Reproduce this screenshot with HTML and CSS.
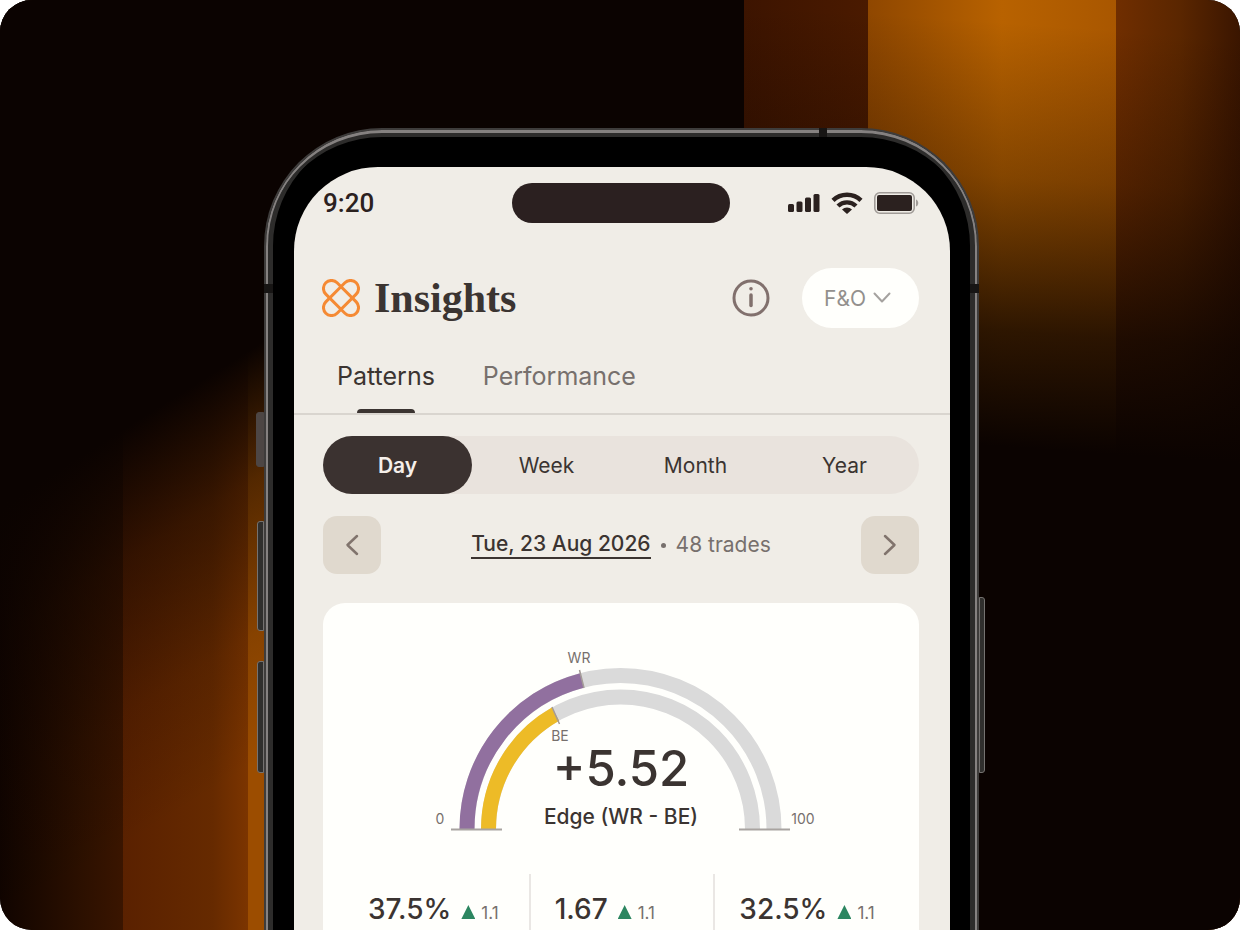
FILE: index.html
```html
<!DOCTYPE html>
<html lang="en">
<head>
    <meta charset="UTF-8">
    <meta name="viewport" content="width=device-width, initial-scale=1.0">
    <title>Insights</title>
    <link rel="stylesheet" href="styles.css">
</head>
<body>
    <div class="stage">
        <div class="glow glow-left"></div>
        <div class="glow glow-right"></div>

        <div class="phone">
            <span class="side-key key-action"></span>
            <span class="side-key key-up"></span>
            <span class="side-key key-down"></span>
            <span class="side-key key-power"></span>
            <span class="antenna antenna-left"></span>
            <span class="antenna antenna-right"></span>
            <span class="antenna antenna-top"></span>

            <main class="screen">
                <div class="status-bar">
                    <span class="time">9:20</span>
                    <span class="island"></span>
                    <div class="status-icons">
                        <svg width="32" height="20" viewBox="0 0 32 20" fill="#2b211f">
                            <rect x="0" y="11" width="6" height="8" rx="1.5"/>
                            <rect x="8.5" y="8.5" width="6" height="10.5" rx="1.5"/>
                            <rect x="17" y="4.500" width="6" height="14.5" rx="1.5"/>
                            <rect x="25.5" y="1" width="6" height="18" rx="1.5"/>
                        </svg>
                        <svg width="32" height="22" viewBox="0 0 32 22" fill="none" stroke="#2b211f" stroke-width="4.4">
                            <path d="M2 8.4a20 20 0 0 1 28 0"/>
                            <path d="M7 14a13 13 0 0 1 18 0"/>
                            <path d="M16 22l-5-4.5a7.300 7.300 0 0 1 10 0z" fill="#2b211f" stroke="none"/>
                        </svg>
                        <svg width="45" height="22" viewBox="0 0 45 22">
                            <rect x="0.8" y="0.8" width="39.4" height="20.4" rx="5" fill="none" stroke="#a09b97" stroke-width="1.6"/>
                            <rect x="3" y="3" width="35" height="16" rx="2" fill="#2b211f"/>
                            <path d="M42 7.5c3 1 3 6 0 7z" fill="#a09b97"/>
                        </svg>
                    </div>
                </div>

                <header class="header">
                    <svg class="logo" width="38" height="38" viewBox="0 0 38 38" fill="none" stroke="#f58a34" stroke-width="3">
                        <rect x="-2.5" y="11" width="43" height="16" rx="8" transform="rotate(45 19 19)"/>
                        <rect x="-2.5" y="11" width="43" height="16" rx="8" transform="rotate(-45 19 19)"/>
                    </svg>
                    <h1 class="title">Insights</h1>
                    <button class="info" aria-label="About insights">
                        <svg width="38" height="38" viewBox="0 0 38 38" fill="none" stroke="#81706d">
                            <circle cx="19" cy="19" r="17" stroke-width="3"/>
                            <path d="M19 16v10.5" stroke-width="3.5" stroke-linecap="round"/>
                            <circle cx="19" cy="9.8" r="1.8" fill="#81706d" stroke="none"/>
                        </svg>
                    </button>
                    <div class="segment">
                        <select aria-label="Market segment">
                            <option>F&amp;O</option>
                        </select>
                        <svg width="18" height="12" viewBox="0 0 18 12" fill="none" stroke="#a5a29f" stroke-width="2" stroke-linecap="round" stroke-linejoin="round">
                            <path d="M1.500 1.500l7.500 8 7.500-8"/>
                        </svg>
                    </div>
                </header>

                <nav class="tabs">
                    <button class="tab active">Patterns</button>
                    <button class="tab">Performance</button>
                </nav>

                <div class="content">
                    <div class="range">
                        <button class="active">Day</button>
                        <button>Week</button>
                        <button>Month</button>
                        <button>Year</button>
                    </div>

                    <div class="date-row">
                        <button class="arrow" aria-label="Previous day">
                            <svg width="14" height="22" viewBox="0 0 14 22"><path d="M12 2L2.500 11l9.500 9"/></svg>
                        </button>
                        <div class="date-info">
                            <button class="date">Tue, 23 Aug 2026</button>
                            <span class="dot"></span>
                            <span class="trades">48 trades</span>
                        </div>
                        <button class="arrow" aria-label="Next day">
                            <svg width="14" height="22" viewBox="0 0 14 22"><path d="M2 2l9.500 9L2 20"/></svg>
                        </button>
                    </div>

                    <section class="card">
                        <div class="gauge">
                            <svg width="400" height="192" viewBox="0 0 400 192" fill="none">
                                <!-- tracks -->
                                <path d="M46 186a153.500 153.500 0 0 1 307 0" stroke="#dadada" stroke-width="15"/>
                                <path d="M67.500 186a132 132 0 0 1 264 0" stroke="#dadada" stroke-width="15"/>
                                <!-- win rate and break even -->
                                <path d="M46 186A153.500 153.500 0 0 1 161 37.400" stroke="#91709f" stroke-width="15"/>
                                <path d="M67.500 186A132 132 0 0 1 134.500 71.100" stroke="#edbb27" stroke-width="15"/>
                                <path d="M158.500 27l4.500 18M131 64l7.500 17" stroke="#a39a97" stroke-width="1.5"/>
                                <path d="M30 186.500h51M318 186.500h51" stroke="#a8a3a0" stroke-width="2"/>
                                <g class="gauge-text">
                                    <text x="158" y="20" text-anchor="middle">WR</text>
                                    <text x="139" y="98" text-anchor="middle">BE</text>
                                    <text x="19" y="181" text-anchor="middle">0</text>
                                    <text x="382" y="181" text-anchor="middle">100</text>
                                </g>
                            </svg>
                            <div class="reading">
                                <strong>+5.52</strong>
                                <span>Edge (WR - BE)</span>
                            </div>
                        </div>

                        <div class="metrics">
                            <div class="metric"><b>37.5%</b><i class="up"></i><small>1.1</small></div>
                            <div class="metric"><b>1.67</b><i class="up"></i><small>1.1</small></div>
                            <div class="metric"><b>32.5%</b><i class="up"></i><small>1.1</small></div>
                        </div>
                    </section>
                </div>
            </main>
        </div>
    </div>
</body>
</html>
```
FILE: styles.css
```css
* {
    box-sizing: border-box;
}

body {
    margin: 0;
    background: #fff;
    font-family: Inter, "Liberation Sans", sans-serif;
    color: #3b3431;
}

button,
select {
    margin: 0;
    padding: 0;
    border: none;
    background: none;
    color: inherit;
    font: inherit;
    cursor: pointer;
}

svg {
    display: block;
}

.stage {
    position: relative;
    display: flex;
    justify-content: center;
    height: 100vh;
    padding: 128px 16px 0;
    border-radius: 32px;
    background: #0b0301;
    overflow: hidden;
}

/* warm light behind the phone */
.glow {
    position: absolute;
    top: 0;
    bottom: 0;
}

.glow-left {
    left: 0;
    width: 22%;
    background:
        linear-gradient(148deg, #0b0301 46%, rgba(11, 3, 1, 0.5) 58%, rgba(11, 3, 1, 0.15) 72%, rgba(11, 3, 1, 0) 84%),
        linear-gradient(90deg, #100400 0, #2c1000 30%, #3a1500 45%, #5a2100 45%, #662a00 78%, #7c3500 91%, #9c4d00 91%);
}

.glow-right {
    right: 0;
    width: 40%;
    background:
        linear-gradient(184deg, rgba(11, 3, 1, 0) 4%, rgba(11, 3, 1, 0.3) 20%, rgba(11, 3, 1, 0.8) 36%, #0b0301 48%),
        linear-gradient(90deg, #3d1400 0, #4a1a00 25%, #8f4700 25%, #b86200 52%, #a95700 75%, #702e00 75%, #5a2600 88%, #3a1500 100%);
}

/* phone body */
.phone {
    position: relative;
    display: flex;
    width: 100%;
    max-width: 715px;
    margin-left: 3px;
    padding: 37px 27px 0 28px;
    border: 2px solid #3e3c3b;
    border-bottom: none;
    border-radius: 118px 118px 0 0;
    background: #000;
    box-shadow: inset 0 3px 0 #858180, inset 2px 0 0 #858180, inset -2px 0 0 #858180,
        inset 0 7px 0 #2d2c2b, inset 7px 0 0 #2d2c2b, inset -7px 0 0 #2d2c2b;
}

.side-key {
    position: absolute;
    border: 1px solid #757270;
    background: #302f2d;
}

.key-action {
    left: -10px;
    top: 282px;
    width: 8px;
    height: 55px;
    border-radius: 3px 0 0 3px;
    border-color: #4d4644;
    background: #4d4644;
}

.key-up {
    left: -9px;
    top: 391px;
    width: 7px;
    height: 110px;
    border-radius: 3px 0 0 3px;
}

.key-down {
    left: -9px;
    top: 531px;
    width: 7px;
    height: 112px;
    border-radius: 3px 0 0 3px;
}

.key-power {
    right: -8px;
    top: 467px;
    width: 6px;
    height: 176px;
    border-radius: 0 3px 3px 0;
}

.antenna {
    position: absolute;
    background: #171514;
}

.antenna-left,
.antenna-right {
    top: 154px;
    width: 9px;
    height: 9px;
}

.antenna-left {
    left: -2px;
}

.antenna-right {
    right: -2px;
}

.antenna-top {
    top: -2px;
    right: 150px;
    width: 8px;
    height: 9px;
}

.screen {
    display: flex;
    flex-direction: column;
    flex: 1;
    min-width: 0;
    border-radius: 84px 84px 0 0;
    background: #f0ede7;
    overflow: hidden;
}

.status-bar {
    display: grid;
    grid-template-columns: 1fr auto 1fr;
    align-items: center;
    padding: 16px 31px 0 29px;
}

.time {
    font: 500 26px/36px Roboto, sans-serif;
    color: #2b211f;
}

.island {
    width: 218px;
    height: 40px;
    border-radius: 20px;
    background: #2b2020;
}

.status-icons {
    display: flex;
    align-items: center;
    justify-content: flex-end;
    gap: 11px;
}

.header {
    display: flex;
    align-items: center;
    padding: 45px 31px 0 28px;
}

.title {
    flex: 1;
    margin: 0 0 0 14px;
    font: 700 42px/52px "Liberation Serif", serif;
}

.info {
    margin-right: 32px;
}

.segment {
    position: relative;
    width: 117px;
    height: 60px;
    border-radius: 30px;
    background: #fffffc;
    color: #93908d;
}

.segment select {
    width: 100%;
    height: 100%;
    padding-left: 22px;
    border-radius: 30px;
    appearance: none;
    font-size: 21px;
}

.segment svg {
    position: absolute;
    right: 28px;
    top: 24px;
    pointer-events: none;
}

.tabs {
    display: flex;
    gap: 48px;
    padding: 26px 43px 0;
    border-bottom: 2px solid #d9d5cf;
}

.tab {
    display: flex;
    flex-direction: column;
    align-items: center;
    gap: 11px;
    font-size: 25px;
    line-height: 44px;
    color: #77706d;
}

.tab::after {
    content: "";
    width: 58px;
    height: 4px;
    border-radius: 4px 4px 0 0;
}

.tab.active {
    color: #3b3431;
}

.tab.active::after {
    background: #3b3431;
}

.content {
    display: flex;
    flex-direction: column;
    flex: 1;
    padding: 21px 31px 0 29px;
}

.range {
    display: grid;
    grid-template-columns: repeat(4, 1fr);
    height: 58px;
    border-radius: 29px;
    background: #e9e3dd;
}

.range button {
    border-radius: 29px;
    font-size: 21px;
}

.range .active {
    background: #3b3230;
    color: #f5efea;
    font-weight: 600;
}

.date-row {
    display: flex;
    align-items: center;
    justify-content: space-between;
    margin-top: 22px;
}

.arrow {
    display: grid;
    place-items: center;
    width: 58px;
    height: 58px;
    border-radius: 14px;
    background: #e0d9ce;
}

.arrow svg {
    fill: none;
    stroke: #81746d;
    stroke-width: 2.5;
    stroke-linecap: round;
    stroke-linejoin: round;
}

.date-info {
    display: flex;
    align-items: center;
    gap: 10px;
    font-size: 21px;
    line-height: 26px;
}

.date {
    border-bottom: 2px solid #3b3431;
    font-weight: 500;
}

.dot {
    width: 5px;
    height: 5px;
    border-radius: 50%;
    background: #77706d;
}

.trades {
    color: #77706d;
}

.card {
    flex: 1;
    margin-top: 29px;
    padding: 40px 21px 0;
    border-radius: 22px 22px 0 0;
    background: #fffffc;
}

.gauge {
    display: grid;
    justify-items: center;
}

.gauge svg,
.reading {
    grid-area: 1 / 1;
}

.gauge-text {
    fill: #77706d;
    font-size: 14px;
}

.reading {
    display: flex;
    flex-direction: column;
    align-items: center;
    align-self: end;
    gap: 10px;
}

.reading strong {
    font-size: 49px;
    line-height: 40px;
    font-weight: 500;
}

.reading span {
    font-size: 21px;
    line-height: 36px;
    font-weight: 500;
}

.metrics {
    display: grid;
    grid-template-columns: repeat(3, 1fr);
    margin-top: 39px;
}

.metric {
    display: flex;
    align-items: baseline;
    padding: 17px 0 0 24px;
    height: 80px;
}

.metric + .metric {
    border-left: 2px solid #eae7e4;
}

.metric b {
    font-size: 28px;
    line-height: 36px;
    font-weight: 500;
}

.metric small {
    font-size: 17px;
    color: #77706d;
}

.up {
    width: 14px;
    height: 14px;
    margin: 0 6px 0 10px;
    background: #2c8660;
    clip-path: polygon(50% 0, 100% 100%, 0 100%);
}
```
